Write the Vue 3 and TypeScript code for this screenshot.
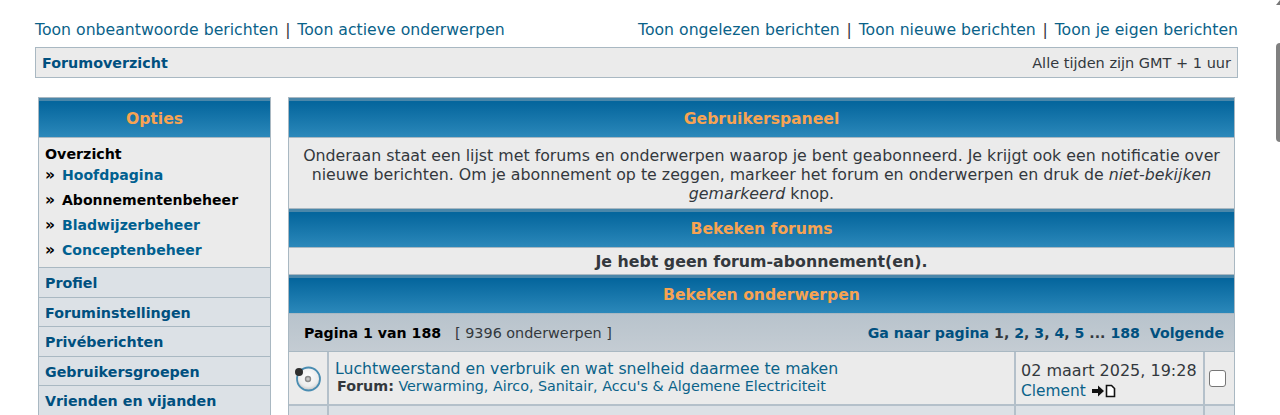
<template>
  <div class="page">
    <div class="toplinks">
      <div>
        <a>Toon onbeantwoorde berichten</a><span class="sep">|</span><a>Toon actieve onderwerpen</a>
      </div>
      <div>
        <a>Toon ongelezen berichten</a><span class="sep">|</span><a>Toon nieuwe berichten</a><span class="sep">|</span><a>Toon je eigen berichten</a>
      </div>
    </div>
    <div class="navbar">
      <a class="bold">Forumoverzicht</a>
      <span>Alle tijden zijn GMT + 1 uur</span>
    </div>

    <div class="columns">
      <aside class="side">
        <div class="head">Opties</div>
        <div class="overview">
          <div class="ov-title">Overzicht</div>
          <div v-for="item in overviewItems" :key="item.label" class="ov-item">
            <span class="arrows">»</span>
            <a :class="{ current: item.current }">{{ item.label }}</a>
          </div>
        </div>
        <div v-for="item in sideLinks" :key="item" class="side-link">{{ item }}</div>
      </aside>

      <main class="main">
        <div class="head">Gebruikerspaneel</div>
        <div class="intro">
          Onderaan staat een lijst met forums en onderwerpen waarop je bent geabonneerd. Je krijgt ook een notificatie over
          nieuwe berichten. Om je abonnement op te zeggen, markeer het forum en onderwerpen en druk de
          <em>niet-bekijken gemarkeerd</em> knop.
        </div>
        <div class="head short">Bekeken forums</div>
        <div class="empty">Je hebt geen forum-abonnement(en).</div>
        <div class="head short">Bekeken onderwerpen</div>
        <div class="pager">
          <div>
            <strong>Pagina 1 van 188</strong>
            <span class="count">[ 9396 onderwerpen ]</span>
          </div>
          <div class="pages">
            Ga naar pagina <span class="cur">1</span><span class="cur">,</span> 2<span class="cur">,</span> 3<span class="cur">,</span> 4<span class="cur">,</span> 5 <span class="cur">...</span> 188 &nbsp;Volgende
          </div>
        </div>
        <div class="row">
          <div class="c-icon">
            <svg width="28" height="28" viewBox="0 0 28 28">
              <defs>
                <radialGradient id="disc" cx="50%" cy="40%" r="65%">
                  <stop offset="0" stop-color="#ffffff" />
                  <stop offset="0.65" stop-color="#ececec" />
                  <stop offset="1" stop-color="#b5b5b5" />
                </radialGradient>
              </defs>
              <circle cx="14.500" cy="15" r="11.500" fill="url(#disc)" stroke="#4a8db2" stroke-width="1.800" />
              <circle cx="14" cy="15" r="2.500" fill="#c4c4c4" stroke="#8a8a8a" stroke-width="1.400" />
              <circle cx="5" cy="8" r="4" fill="#2e2e2e" />
            </svg>
          </div>
          <div class="c-title">
            <a class="topic">Luchtweerstand en verbruik en wat snelheid daarmee te maken</a>
            <div class="forum"><strong>Forum:</strong> <a>Verwarming, Airco, Sanitair, Accu's &amp; Algemene Electriciteit</a></div>
          </div>
          <div class="c-date">
            <div>02 maart 2025, 19:28</div>
            <div class="author">
              <a>Clement</a>
              <svg width="24" height="14" viewBox="0 0 24 14">
                <path d="M0 5h6V1.500L12 7l-6 5.500V9H0z" fill="#111" />
                <path d="M14.500 1.500h5l3 3v8h-8z" fill="#fff" stroke="#111" stroke-width="1.600" />
              </svg>
            </div>
          </div>
          <div class="c-check"><span class="box"></span></div>
        </div>
        <div class="row alt">
          <div class="c-icon"></div>
          <div class="c-title"></div>
          <div class="c-date"></div>
          <div class="c-check"></div>
        </div>
      </main>
    </div>

    <div class="scroll-arrow"></div>
    <div class="scroll-thumb"></div>
  </div>
</template>

<script setup lang="ts">
interface OverviewItem {
  label: string;
  current?: boolean;
}

const overviewItems: OverviewItem[] = [
  { label: 'Hoofdpagina' },
  { label: 'Abonnementenbeheer', current: true },
  { label: 'Bladwijzerbeheer' },
  { label: 'Conceptenbeheer' },
];

const sideLinks = ['Profiel', 'Foruminstellingen', 'Privéberichten', 'Gebruikersgroepen', 'Vrienden en vijanden'];
</script>

<style>
html,
body {
  margin: 0;
  height: 415px;
  overflow: hidden;
  background: #fff;
}
</style>

<style scoped>
.page {
  height: 415px;
  overflow: hidden;
  padding: 20px 42px 0 35px;
  font-family: "DejaVu Sans", Verdana, sans-serif;
  font-size: 15.700px;
  color: #33383d;
  box-sizing: border-box;
}

a {
  color: #0a6289;
}

.toplinks {
  display: flex;
  justify-content: space-between;
  line-height: 20px;
}

.sep {
  margin: 0 6.800px;
}

.navbar {
  display: flex;
  justify-content: space-between;
  align-items: center;
  height: 31px;
  margin-top: 7px;
  padding: 0 6px;
  box-sizing: border-box;
  border: 1px solid #a9b8c2;
  background: #ebebeb;
  font-size: 14.500px;
}

.bold {
  font-size: 14.300px;
  font-weight: bold;
  color: #00507f;
}

.columns {
  display: flex;
  align-items: flex-start;
  gap: 17px;
  margin: 19px 3px 0 3px;
}

.head {
  height: 41px;
  padding-top: 2px;
  box-sizing: border-box;
  border-top: 1px solid #a9b8c2;
  border-bottom: 1px solid #a9b8c2;
  background: linear-gradient(#05669d 0, #05669d 12%, #2b88ba 100%);
  box-shadow: inset 0 3px 0 #4a87aa;
  color: #f7a352;
  font-weight: bold;
  font-size: 15.600px;
  display: flex;
  align-items: center;
  justify-content: center;
}

.head.short {
  height: 40px;
}

.side {
  width: 233px;
  flex: none;
  border-left: 1px solid #a9b8c2;
  border-right: 1px solid #a9b8c2;
  box-sizing: border-box;
}

.overview {
  background: #ebebeb;
  padding: 8px 6px 4px;
  font-weight: bold;
  font-size: 14.250px;
  color: #000;
}

.ov-title {
  line-height: 17px;
}

.ov-item {
  display: flex;
  align-items: baseline;
  line-height: 25px;
  font-size: 14.050px;
}

.ov-item a {
  color: #006090;
}

.ov-item a.current {
  color: #000;
}

.arrows {
  width: 17px;
  flex: none;
  font-size: 15.500px;
}

.side-link {
  height: 29.500px;
  padding: 2px 0 0 6px;
  box-sizing: border-box;
  border-top: 1px solid #a9b8c2;
  background: #dce1e6;
  font-size: 14.250px;
  font-weight: bold;
  color: #00507f;
  display: flex;
  align-items: center;
}

.main {
  width: 947px;
  flex: none;
  border-left: 1px solid #a9b8c2;
  border-right: 1px solid #a9b8c2;
  box-sizing: border-box;
}

.intro {
  height: 70px;
  box-sizing: border-box;
  background: #ebebeb;
  padding: 8px 8px 0;
  text-align: center;
  font-size: 15.800px;
  line-height: 19px;
}

.empty {
  background: #ebebeb;
  height: 26px;
  display: flex;
  align-items: center;
  justify-content: center;
  font-weight: bold;
  font-size: 15.800px;
}

.pager {
  height: 38px;
  box-sizing: border-box;
  display: flex;
  justify-content: space-between;
  align-items: center;
  padding: 0 10px 0 15px;
  background: linear-gradient(#b8c3cc, #c4ccd3);
  border-bottom: 1px solid #a9b8c2;
  font-size: 14.150px;
}

.pager strong {
  color: #000;
}

.count {
  margin-left: 14px;
  font-size: 14.370px;
}

.pages {
  font-weight: bold;
  color: #00507f;
}

.cur {
  color: #33383d;
}

.row {
  display: flex;
  height: 54px;
  box-sizing: border-box;
  background: #ebebeb;
  border-bottom: 2px solid #b4c0ca;
}

.row.alt {
  background: #dce1e6;
}

.c-icon {
  width: 40px;
  flex: none;
  box-sizing: border-box;
  display: flex;
  align-items: center;
  justify-content: center;
  border-right: 2px solid #b4c0ca;
}

.c-title {
  flex: 1;
  padding: 7px 6px 0;
  line-height: 19px;
}

.topic {
  display: block;
}

.forum {
  margin-top: -1px;
  font-size: 14.300px;
  padding-left: 2px;
  line-height: 18px;
}

.c-date {
  width: 189px;
  flex: none;
  box-sizing: border-box;
  border-left: 2px solid #b4c0ca;
  padding: 9px 5px 0;
  font-size: 16px;
  line-height: 20px;
  white-space: nowrap;
}

.author {
  display: flex;
  align-items: center;
  gap: 6px;
  font-size: 15.400px;
}

.c-check {
  width: 31px;
  flex: none;
  box-sizing: border-box;
  border-left: 2px solid #b4c0ca;
  padding-right: 5px;
  display: flex;
  align-items: center;
  justify-content: center;
}

.box {
  width: 17px;
  height: 17px;
  box-sizing: border-box;
  border: 1.500px solid #767676;
  border-radius: 3px;
  background: #fff;
}

.scroll-arrow {
  position: fixed;
  top: 0;
  right: 0;
  width: 0;
  height: 0;
  border-left: 4px solid transparent;
  border-bottom: 5px solid #777;
}

.scroll-thumb {
  position: fixed;
  top: 43px;
  right: 0;
  width: 4px;
  height: 99px;
  background: #808080;
  border-radius: 4px 0 0 4px;
}
</style>
